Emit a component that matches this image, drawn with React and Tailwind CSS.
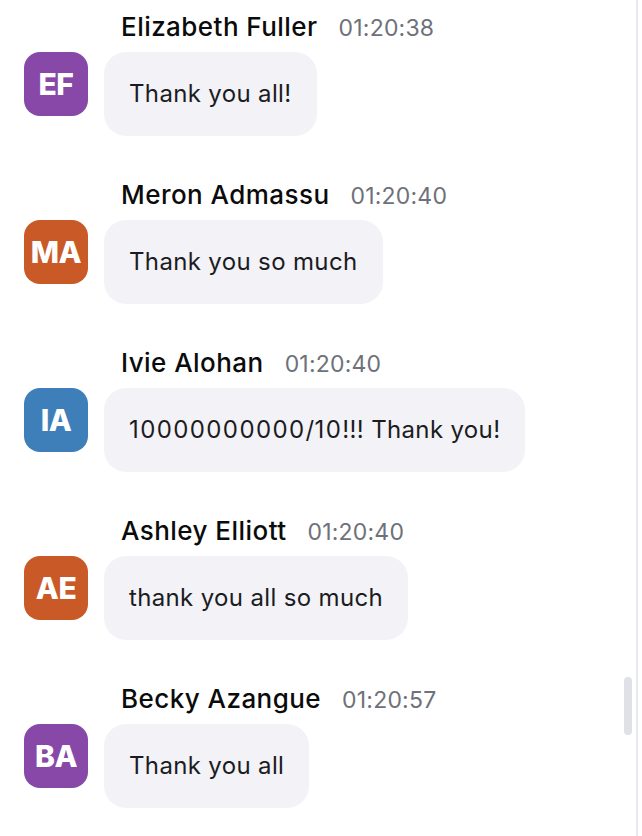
import React from 'react';

const messages = [
  { initials: 'EF', name: 'Elizabeth Fuller', time: '01:20:38', text: 'Thank you all!', color: 'bg-[#8748a8]' },
  { initials: 'MA', name: 'Meron Admassu', time: '01:20:40', text: 'Thank you so much', color: 'bg-[#c95a27]' },
  { initials: 'IA', name: 'Ivie Alohan', time: '01:20:40', text: '10000000000/10!!! Thank you!', color: 'bg-[#3e7fb9]' },
  { initials: 'AE', name: 'Ashley Elliott', time: '01:20:40', text: 'thank you all so much', color: 'bg-[#c95a27]' },
  { initials: 'BA', name: 'Becky Azangue', time: '01:20:57', text: 'Thank you all', color: 'bg-[#8748a8]' },
];

// digits in the reference font run a bit wider than Inter's
const renderText = (text) =>
  text.split(/(\d+)/).map((part, i) =>
    /^\d+$/.test(part) ? (
      <span key={i} className="tracking-[1.4px]">{part}</span>
    ) : (
      <span key={i}>{part}</span>
    )
  );

const Message = ({ msg }) => (
  <div className="flex flex-col">
    <div className="flex items-baseline pl-[121px] h-8 leading-8">
      <span className="text-[26px] font-medium text-[#0b0b0c] tracking-[0.45px]">{msg.name}</span>
      <span className="ml-[21px] text-[23px] text-[#6e717a] tracking-[0.2px]">{msg.time}</span>
    </div>
    <div className="flex items-start gap-4 pl-6 mt-[9px]">
      <div
        className={`w-16 h-16 rounded-[16px] flex items-center justify-center text-white text-[30px] font-extrabold tracking-[-0.5px] ${msg.color}`}
      >
        {msg.initials}
      </div>
      <div className="bg-[#f2f2f7] rounded-[22px] px-[25px] py-6 text-[24px] leading-9 text-[#1b1c1f] tracking-[0.35px]">
        {renderText(msg.text)}
      </div>
    </div>
  </div>
);

const App = () => {
  return (
    <div className="w-full h-[836px] bg-white overflow-hidden flex" style={{ fontFamily: 'Inter, "Noto Sans", sans-serif' }}>
      <div className="relative w-[638px] h-full border-r-2 border-[#e8e8ef]">
        <div className="flex flex-col gap-[43px] pt-[11px]">
          {messages.map((msg, index) => (
            <Message key={index} msg={msg} />
          ))}
        </div>
        {/* scrollbar thumb */}
        <div className="absolute right-[4px] top-[677px] w-2 h-[58px] rounded-full bg-[#dfe1e6]" />
      </div>
    </div>
  );
};

export default App;
